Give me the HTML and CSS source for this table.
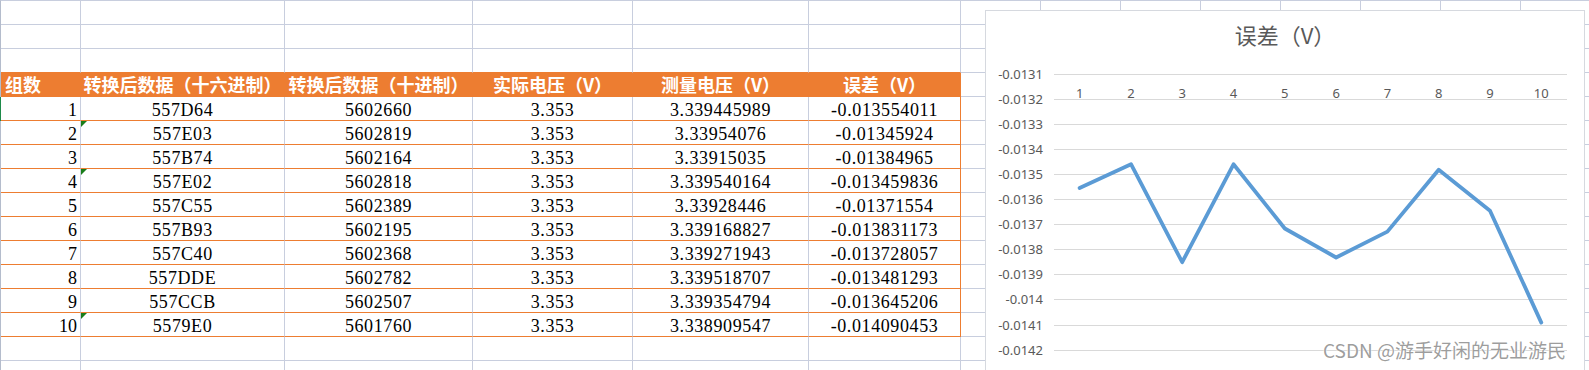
FILE: index.html
```html
<!DOCTYPE html>
<html lang="zh-CN">
<head>
<meta charset="utf-8">
<title>误差</title>
<link rel="stylesheet" href="styles.css">
</head>
<body>
<div class="page">
  <div class="sheet">
    <!-- row 1 -->
    <div class="c"></div><div class="c"></div><div class="c"></div><div class="c"></div><div class="c"></div><div class="c"></div>
    <div class="c"></div><div class="c"></div><div class="c"></div><div class="c"></div><div class="c"></div><div class="c"></div><div class="c"></div><div class="c"></div>
    <!-- row 2 -->
    <div class="c"></div><div class="c"></div><div class="c"></div><div class="c"></div><div class="c"></div><div class="c"></div>
    <div class="c"></div><div class="c"></div><div class="c"></div><div class="c"></div><div class="c"></div><div class="c"></div><div class="c"></div><div class="c"></div>
    <!-- row 3 -->
    <div class="c above"></div><div class="c above"></div><div class="c above"></div><div class="c above"></div><div class="c above"></div><div class="c above"></div>
    <div class="c"></div><div class="c"></div><div class="c"></div><div class="c"></div><div class="c"></div><div class="c"></div><div class="c"></div><div class="c"></div>
    <!-- header -->
    <div class="c hd left">组数</div><div class="c hd">转换后数据（十六进制）</div><div class="c hd">转换后数据（十进制）</div><div class="c hd">实际电压（V）</div><div class="c hd">测量电压（V）</div><div class="c hd last">误差（V）</div>
    <div class="c"></div><div class="c"></div><div class="c"></div><div class="c"></div><div class="c"></div><div class="c"></div><div class="c"></div><div class="c"></div>
    <!-- data 1 -->
    <div class="c d num sel">1</div><div class="c d">557D64</div><div class="c d">5602660</div><div class="c d">3.353</div><div class="c d">3.339445989</div><div class="c d last">-0.013554011</div>
    <div class="c"></div><div class="c"></div><div class="c"></div><div class="c"></div><div class="c"></div><div class="c"></div><div class="c"></div><div class="c"></div>
    <!-- data 2 -->
    <div class="c d num">2</div><div class="c d flag">557E03</div><div class="c d">5602819</div><div class="c d">3.353</div><div class="c d">3.33954076</div><div class="c d last">-0.01345924</div>
    <div class="c"></div><div class="c"></div><div class="c"></div><div class="c"></div><div class="c"></div><div class="c"></div><div class="c"></div><div class="c"></div>
    <!-- data 3 -->
    <div class="c d num">3</div><div class="c d">557B74</div><div class="c d">5602164</div><div class="c d">3.353</div><div class="c d">3.33915035</div><div class="c d last">-0.01384965</div>
    <div class="c"></div><div class="c"></div><div class="c"></div><div class="c"></div><div class="c"></div><div class="c"></div><div class="c"></div><div class="c"></div>
    <!-- data 4 -->
    <div class="c d num">4</div><div class="c d flag">557E02</div><div class="c d">5602818</div><div class="c d">3.353</div><div class="c d">3.339540164</div><div class="c d last">-0.013459836</div>
    <div class="c"></div><div class="c"></div><div class="c"></div><div class="c"></div><div class="c"></div><div class="c"></div><div class="c"></div><div class="c"></div>
    <!-- data 5 -->
    <div class="c d num">5</div><div class="c d">557C55</div><div class="c d">5602389</div><div class="c d">3.353</div><div class="c d">3.33928446</div><div class="c d last">-0.01371554</div>
    <div class="c"></div><div class="c"></div><div class="c"></div><div class="c"></div><div class="c"></div><div class="c"></div><div class="c"></div><div class="c"></div>
    <!-- data 6 -->
    <div class="c d num">6</div><div class="c d">557B93</div><div class="c d">5602195</div><div class="c d">3.353</div><div class="c d">3.339168827</div><div class="c d last">-0.013831173</div>
    <div class="c"></div><div class="c"></div><div class="c"></div><div class="c"></div><div class="c"></div><div class="c"></div><div class="c"></div><div class="c"></div>
    <!-- data 7 -->
    <div class="c d num">7</div><div class="c d">557C40</div><div class="c d">5602368</div><div class="c d">3.353</div><div class="c d">3.339271943</div><div class="c d last">-0.013728057</div>
    <div class="c"></div><div class="c"></div><div class="c"></div><div class="c"></div><div class="c"></div><div class="c"></div><div class="c"></div><div class="c"></div>
    <!-- data 8 -->
    <div class="c d num">8</div><div class="c d">557DDE</div><div class="c d">5602782</div><div class="c d">3.353</div><div class="c d">3.339518707</div><div class="c d last">-0.013481293</div>
    <div class="c"></div><div class="c"></div><div class="c"></div><div class="c"></div><div class="c"></div><div class="c"></div><div class="c"></div><div class="c"></div>
    <!-- data 9 -->
    <div class="c d num">9</div><div class="c d">557CCB</div><div class="c d">5602507</div><div class="c d">3.353</div><div class="c d">3.339354794</div><div class="c d last">-0.013645206</div>
    <div class="c"></div><div class="c"></div><div class="c"></div><div class="c"></div><div class="c"></div><div class="c"></div><div class="c"></div><div class="c"></div>
    <!-- data 10 -->
    <div class="c d num">10</div><div class="c d flag">5579E0</div><div class="c d">5601760</div><div class="c d">3.353</div><div class="c d">3.338909547</div><div class="c d last">-0.014090453</div>
    <div class="c"></div><div class="c"></div><div class="c"></div><div class="c"></div><div class="c"></div><div class="c"></div><div class="c"></div><div class="c"></div>
    <!-- row 15 -->
    <div class="c"></div><div class="c"></div><div class="c"></div><div class="c"></div><div class="c"></div><div class="c"></div>
    <div class="c"></div><div class="c"></div><div class="c"></div><div class="c"></div><div class="c"></div><div class="c"></div><div class="c"></div><div class="c"></div>
    <!-- row 16 -->
    <div class="c"></div><div class="c"></div><div class="c"></div><div class="c"></div><div class="c"></div><div class="c"></div>
    <div class="c"></div><div class="c"></div><div class="c"></div><div class="c"></div><div class="c"></div><div class="c"></div><div class="c"></div><div class="c"></div>
  </div>

  <div class="chart">
    <svg class="chart-svg" width="598" height="398" viewBox="0 0 598 398" xmlns="http://www.w3.org/2000/svg">
      <text class="title" x="299" y="33" text-anchor="middle">误差（V）</text>
      <g class="grid">
        <line x1="68" x2="581" y1="63.5" y2="63.5"/>
        <line x1="68" x2="581" y1="88.5" y2="88.5"/>
        <line x1="68" x2="581" y1="113.5" y2="113.5"/>
        <line x1="68" x2="581" y1="138.5" y2="138.5"/>
        <line x1="68" x2="581" y1="163.5" y2="163.5"/>
        <line x1="68" x2="581" y1="188.5" y2="188.5"/>
        <line x1="68" x2="581" y1="213.5" y2="213.5"/>
        <line x1="68" x2="581" y1="238.5" y2="238.5"/>
        <line x1="68" x2="581" y1="263.5" y2="263.5"/>
        <line x1="68" x2="581" y1="288.5" y2="288.5"/>
        <line x1="68" x2="581" y1="314.5" y2="314.5"/>
        <line x1="68" x2="581" y1="339.5" y2="339.5"/>
      </g>
      <g class="ylab" text-anchor="end">
        <text x="57" y="68">-0.0131</text>
        <text x="57" y="93">-0.0132</text>
        <text x="57" y="118">-0.0133</text>
        <text x="57" y="143">-0.0134</text>
        <text x="57" y="168">-0.0135</text>
        <text x="57" y="193">-0.0136</text>
        <text x="57" y="218">-0.0137</text>
        <text x="57" y="243">-0.0138</text>
        <text x="57" y="268">-0.0139</text>
        <text x="57" y="293">-0.014</text>
        <text x="57" y="319">-0.0141</text>
        <text x="57" y="344">-0.0142</text>
      </g>
      <g class="xlab" text-anchor="middle">
        <text x="93.6" y="87">1</text>
        <text x="145" y="87">2</text>
        <text x="196.2" y="87">3</text>
        <text x="247.5" y="87">4</text>
        <text x="298.8" y="87">5</text>
        <text x="350.1" y="87">6</text>
        <text x="401.4" y="87">7</text>
        <text x="452.7" y="87">8</text>
        <text x="504" y="87">9</text>
        <text x="555.3" y="87">10</text>
      </g>
      <polyline class="series" points="93.6,177 145,153.2 196.2,251.2 247.5,153.3 298.8,217.5 350.1,246.5 401.4,220.6 452.7,158.7 504,199.8 555.3,311.6"/>
    </svg>
  </div>

  <div class="watermark">CSDN @游手好闲的无业游民</div>
</div>
</body>
</html>
```

FILE: styles.css
```css
html, body {
  margin: 0;
  padding: 0;
  background: #ffffff;
}

body {
  width: 1589px;
  height: 370px;
  overflow: hidden;
}

.page {
  position: relative;
  width: 1589px;
  height: 370px;
  overflow: hidden;
}

.sheet {
  display: grid;
  grid-template-columns: 80px 204px 188px 160px 176px 152px repeat(8, 80px);
  grid-auto-rows: 24px;
  border-top: 1px solid #c8cede;
  border-left: 1px solid #b4bccc;
  width: max-content;
  font-family: "Liberation Serif", "Noto Sans CJK SC", serif;
  font-size: 18px;
  color: #000000;
}

.c {
  box-sizing: border-box;
  border-right: 1px solid #c8cede;
  border-bottom: 1px solid #c8cede;
  position: relative;
  white-space: nowrap;
}

.above {
  border-bottom-color: #ed7d31;
}

.hd {
  background: #ed7d31;
  border-right-color: #ed7d31;
  border-bottom-color: #ed7d31;
  color: #ffffff;
  font-family: "Noto Sans CJK SC", sans-serif;
  font-weight: 700;
  font-size: 18px;
  line-height: 23px;
  text-align: center;
  overflow: visible;
}

.hd.left {
  text-align: left;
  padding-left: 4px;
}

.d {
  border-bottom-color: #ed7d31;
  text-align: center;
  line-height: 23px;
  padding-top: 2px;
  letter-spacing: 0.6px;
}

.d.last,
.hd.last {
  border-right-color: #ed7d31;
}

.d.num {
  text-align: right;
  padding-right: 3px;
  letter-spacing: 0;
}

.sel {
  box-shadow: -1px 0 0 #1e8a4a;
}

.flag::before {
  content: "";
  position: absolute;
  left: 0;
  top: 0;
  width: 0;
  height: 0;
  border-top: 6px solid #1a7d1a;
  border-right: 6px solid transparent;
}

.chart {
  position: absolute;
  left: 985px;
  top: 10px;
  width: 600px;
  height: 400px;
  box-sizing: border-box;
  border: 1px solid #d6d9df;
  background: #ffffff;
}

.chart-svg {
  display: block;
}

.title {
  font-family: "Noto Sans CJK SC", sans-serif;
  font-size: 22px;
  fill: #595959;
}

.grid line {
  stroke: #d9d9d9;
  stroke-width: 1;
}

.ylab text,
.xlab text {
  font-family: "Noto Sans", "Liberation Sans", sans-serif;
  font-size: 13px;
  fill: #595959;
}

.series {
  fill: none;
  stroke: #5b9bd5;
  stroke-width: 3.8;
  stroke-linejoin: round;
  stroke-linecap: round;
}

.watermark {
  position: absolute;
  left: 1323px;
  top: 337px;
  font-family: "Noto Sans CJK SC", sans-serif;
  font-size: 19px;
  line-height: 26px;
  color: rgba(140, 140, 140, 0.85);
  text-shadow: 0 0 2px #ffffff, 0 0 1px #ffffff;
  white-space: nowrap;
}
```
